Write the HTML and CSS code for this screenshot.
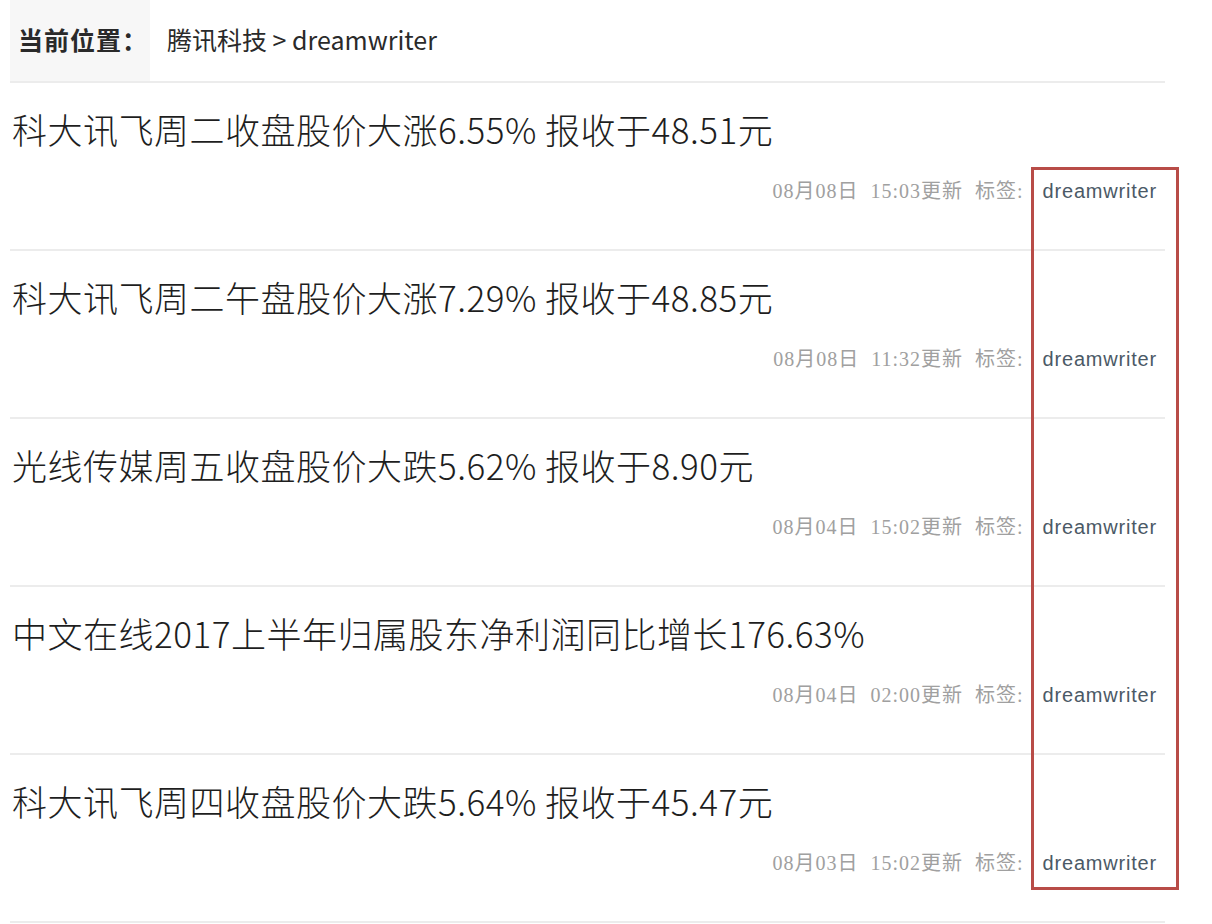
FILE: index.html
```html
<!DOCTYPE html>
<html lang="zh-CN">
<head>
<meta charset="utf-8">
<title>dreamwriter</title>
<link rel="stylesheet" href="styles.css">
</head>
<body>
<div class="page">
  <div class="crumb">
    <div class="crumb-label">当前位置：</div>
    <div class="crumb-path">腾讯科技 &gt; dreamwriter</div>
  </div>
  <ul class="list">
    <li class="item">
      <h2 class="title">科大讯飞周二收盘股价大涨6.55% 报收于48.51元</h2>
      <div class="meta"><span class="time">08月08日&nbsp; 15:03更新&nbsp; 标签:</span><span class="tag">dreamwriter</span></div>
    </li>
    <li class="item">
      <h2 class="title">科大讯飞周二午盘股价大涨7.29% 报收于48.85元</h2>
      <div class="meta"><span class="time">08月08日&nbsp; 11:32更新&nbsp; 标签:</span><span class="tag">dreamwriter</span></div>
    </li>
    <li class="item">
      <h2 class="title">光线传媒周五收盘股价大跌5.62% 报收于8.90元</h2>
      <div class="meta"><span class="time">08月04日&nbsp; 15:02更新&nbsp; 标签:</span><span class="tag">dreamwriter</span></div>
    </li>
    <li class="item">
      <h2 class="title">中文在线2017上半年归属股东净利润同比增长176.63%</h2>
      <div class="meta"><span class="time">08月04日&nbsp; 02:00更新&nbsp; 标签:</span><span class="tag">dreamwriter</span></div>
    </li>
    <li class="item">
      <h2 class="title">科大讯飞周四收盘股价大跌5.64% 报收于45.47元</h2>
      <div class="meta"><span class="time">08月03日&nbsp; 15:02更新&nbsp; 标签:</span><span class="tag">dreamwriter</span></div>
    </li>
  </ul>
  <div class="highlight"></div>
</div>
</body>
</html>
```

FILE: styles.css
```css
html, body {
  margin: 0;
  padding: 0;
  background: #ffffff;
}
.page {
  position: relative;
  width: 1155px;
  margin-left: 10px;
  font-family: "Noto Sans CJK SC", "Noto Sans", sans-serif;
  color: #222;
}
.crumb {
  display: flex;
  align-items: center;
  height: 81px;
  border-bottom: 2px solid #ececec;
}
.crumb-label {
  width: 140px;
  height: 100%;
  box-sizing: border-box;
  padding: 0 0 4px 8px;
  display: flex;
  align-items: center;
  background: #f7f7f7;
  font-size: 25px;
  font-weight: bold;
  letter-spacing: 1px;
  color: #2a2a2a;
}
.crumb-path {
  padding: 0 0 4px 17px;
  font-size: 25px;
  color: #2a2a2a;
}
.list {
  list-style: none;
  margin: 0;
  padding: 0;
}
.item {
  padding: 26px 0 43px 2px;
  border-bottom: 2px solid #ececec;
}
.title {
  margin: 0;
  font-size: 35px;
  line-height: 40px;
  font-weight: 300;
  letter-spacing: 0.5px;
  color: #1e1e1e;
}
.meta {
  margin-top: 27px;
  display: flex;
  justify-content: flex-end;
  align-items: center;
  line-height: 30px;
  padding-right: 8px;
}
.time {
  font-family: "Liberation Serif", "Noto Sans CJK SC", serif;
  font-size: 20px;
  letter-spacing: 1px;
  color: #a0a0a0;
}
.tag {
  margin-left: 19px;
  font-family: "Liberation Sans", "Noto Sans", sans-serif;
  font-size: 20px;
  letter-spacing: 0.8px;
  color: #4b5966;
}
.highlight {
  position: absolute;
  left: 1021px;
  top: 167px;
  width: 142px;
  height: 717px;
  border: 3px solid #b84c47;
}
```
